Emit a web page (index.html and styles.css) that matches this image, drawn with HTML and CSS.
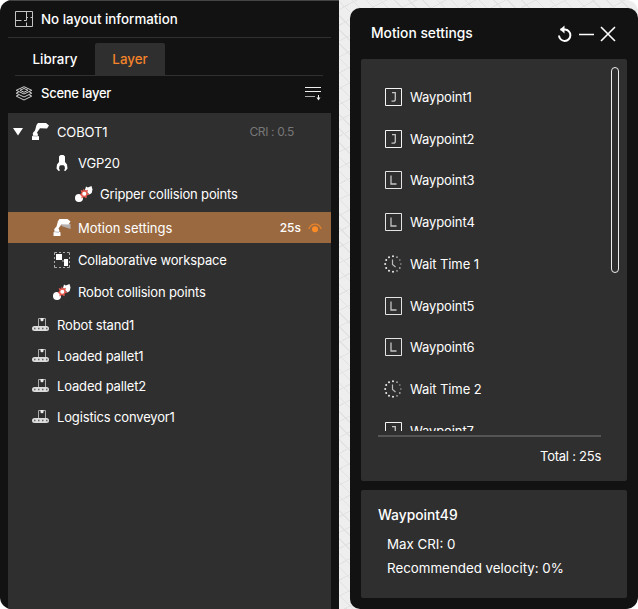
FILE: index.html
```html
<!DOCTYPE html>
<html lang="en">
<head>
<meta charset="utf-8">
<title>Layer panel</title>
<link rel="stylesheet" href="styles.css">
</head>
<body>
<svg class="defs" width="0" height="0">
  <defs>
    <symbol id="layout" viewBox="0 0 18 16"><path d="M.5.5h17v15H.5zM11.500 .5v9h-2.500M.5 9.500h6M11.500 6.500h1.500M15.500 6.500h2M11.500 11.500v4" fill="none" stroke="#c4c4c4"/></symbol>
    <symbol id="layers" viewBox="0 0 18 15"><path d="M9 .7l7.800 3.600L9 8 1.200 4.300zM4 5.700L1.200 7.200 9 11l7.800-3.800L14 5.700M4 8.700l-2.800 1.400L9 14l7.800-3.900L14 8.700M5 4.300l4-1.800 4 1.800-4 1.900z" fill="none" stroke="#d0d0d0" stroke-width="1"/></symbol>
    <symbol id="sort" viewBox="0 0 17 15"><path d="M0 1.500h16M0 5.500h16" stroke="#eee" stroke-width="1.100"/><path d="M0 10.500h10" stroke="#aaa"/><path d="M13.500 9v4" stroke="#eee"/><path d="M11.500 11.500h4l-2 3z" fill="#eee"/></symbol>
    <symbol id="robot" viewBox="0 0 17 17"><path d="M6 0h8l3 2.500L15 5.500 8 5.200 5 9.500l1 2-.5 1 1.500 1V17H0v-3.500l1-1L.8 10 3 7.500 4.500 2z" fill="#fff"/><path d="M1 12.800l4.500.5" stroke="#aaa" stroke-width=".8"/></symbol>
    <symbol id="motion" viewBox="0 0 17 17"><path d="M8 5h9v5l-9-3z" fill="#b7b1ad"/><path d="M6 0h8l3 2.500L15 5.500 8 5.200 5 9.500l1 2-.5 1 1.500 1V17H0v-3.500l1-1L.8 10 3 7.500 4.500 2z" fill="#fff"/><path d="M1 12.800l4.500.5" stroke="#aaa" stroke-width=".8"/></symbol>
    <symbol id="gripper" viewBox="0 0 12 16"><path d="M4.500 0h3L9 1.500V7l2 2.500.5 4L9.500 16 8 15.500l1-2L8.500 11l-1-.8h-3l-1 .8-.5 2.500 1 2-1.500.5L.5 13.500l.5-4L3 7V1.500z" fill="#fff"/></symbol>
    <symbol id="collision" viewBox="0 0 18 16"><circle cx="4" cy="12" r="4" fill="#fff"/><path d="M10 4l1-3.500 1.800 1L16.500 0l1 3.500-.8 3.500-2.200 1.500z" fill="#fff"/><path d="M8.500 2.500l1.500 2 3-.8-.7 3 2 2-2.500.8-.3 2.800-2.500-1.200-2.500 1.400V10L4.500 8.500l2-1.600L5.700 4l2.500.8z" fill="#e6594f"/><circle cx="9.300" cy="7.800" r="2" fill="#fff"/></symbol>
    <symbol id="workspace" viewBox="0 0 16 16"><path d="M.5 3V.5H3M5 .5h2M9 .5h2M13 .5h2.500V3M15.500 5v2M15.500 9v2M15.500 13v2.500H13M11 15.500H9M7 15.500H5M3 15.500H.5V13M.5 11V9M.5 7V5" fill="none" stroke="#aaa"/><path d="M2 2h6v6H2zM10 7h4v7h-4z" fill="#fff"/><path d="M8 8h2v2H8z" fill="#777"/></symbol>
    <symbol id="stand" viewBox="0 0 17 13"><path d="M6.500 8V.5h7V8" fill="none" stroke="#aaa"/><path d="M8.500 0h3v2.500L10 3.500 8.500 2.500z" fill="#eee"/><rect y="8" width="17" height="5" rx="2.500" fill="#ddd"/><path d="M2 10.500h1.500M6 10.500h1.500M10 10.500h1.500M14 10.500h1.500" stroke="#666" stroke-width="1.300"/></symbol>
    <symbol id="eye" viewBox="0 0 14 10"><path d="M.7 6C3.500-.5 10.500-.5 13.300 6" fill="none" stroke="#e98327" stroke-width="1.200"/><circle cx="7" cy="6.300" r="3" fill="#ff8b25"/></symbol>
    <symbol id="joint" viewBox="0 0 17 18"><path d="M.5.500h16v17H.5z" fill="none" stroke="#f4f4f4"/><path d="M7 4.700h3.300v6.800q0 1.700-2 1.700H6.500" fill="none" stroke="#c4c4c4" stroke-width="1.300"/></symbol>
    <symbol id="linear" viewBox="0 0 17 18"><path d="M.5.500h16v17H.5z" fill="none" stroke="#e4e4e4"/><path d="M6 4.500v8.500h5.500" fill="none" stroke="#c4c4c4" stroke-width="1.300"/></symbol>
    <symbol id="wait" viewBox="0 0 18 18"><g fill="#eee"><circle cx="9" cy="1.200" r="1"/><circle cx="5" cy="2.200" r="1"/><circle cx="2.200" cy="5" r="1"/><circle cx="1.200" cy="9" r="1"/><circle cx="2.200" cy="13" r="1"/><circle cx="5" cy="15.800" r="1"/><circle cx="9" cy="16.800" r="1"/></g><g fill="#aaa"><circle cx="13" cy="2.200" r=".9"/><circle cx="13" cy="15.800" r=".9"/><circle cx="15.800" cy="13" r=".9"/></g><g fill="#777"><circle cx="15.800" cy="5" r=".9"/><circle cx="16.800" cy="9" r=".9"/></g><path d="M8.500 4.500v5l3 2.500" fill="none" stroke="#bbb" stroke-width="1.200"/></symbol>
  </defs>
</svg>
<main class="app">
  <section class="side">
    <header class="info"><svg width="18" height="16"><use href="#layout"/></svg><span>No layout information</span></header>
    <nav class="tabs"><span class="tab">Library</span><span class="tab active">Layer</span></nav>
    <div class="scene"><svg width="18" height="15"><use href="#layers"/></svg><span>Scene layer</span><svg class="push" width="17" height="15"><use href="#sort"/></svg></div>
    <div class="tree">
      <div class="row root"><svg class="caret" width="10" height="8"><path d="M0 0h10L5 7.500z" fill="#fff"/></svg><svg width="17" height="17"><use href="#robot"/></svg><span>COBOT1</span><span class="cri">CRI : 0.5</span></div>
      <div class="row vgp"><svg width="12" height="16"><use href="#gripper"/></svg><span>VGP20</span></div>
      <div class="row leaf"><svg width="18" height="16"><use href="#collision"/></svg><span>Gripper collision points</span></div>
      <div class="row child selected"><svg width="18" height="17"><use href="#motion"/></svg><span>Motion settings</span><span class="time">25s</span><svg class="eye" width="14" height="10"><use href="#eye"/></svg></div>
      <div class="row child gap1"><svg width="18" height="16"><use href="#workspace"/></svg><span>Collaborative workspace</span></div>
      <div class="row child gap1"><svg width="18" height="16"><use href="#collision"/></svg><span>Robot collision points</span></div>
      <div class="row item gap2"><svg width="17" height="13"><use href="#stand"/></svg><span>Robot stand1</span></div>
      <div class="row item"><svg width="17" height="13"><use href="#stand"/></svg><span>Loaded pallet1</span></div>
      <div class="row item tight"><svg width="17" height="13"><use href="#stand"/></svg><span>Loaded pallet2</span></div>
      <div class="row item"><svg width="17" height="13"><use href="#stand"/></svg><span>Logistics conveyor1</span></div>
    </div>
  </section>
  <section class="dialog">
    <header class="bar"><h1>Motion settings</h1>
      <svg width="50" height="18" fill="none" stroke="#fff"><path d="M3.500 4.500H8a5.700 5.700 0 1 1-6 6" stroke-width="2"/><path d="M3 4.500L7.500.5v8z" fill="#fff" stroke="none"/><path d="M22 9.500h15" stroke-width="1.500"/></svg>
      <svg class="close" width="16" height="16"><path d="M1 1l14 14M15 1L1 15" stroke="#fff" stroke-width="1.600"/></svg>
    </header>
    <div class="card steps">
      <div class="list">
        <div class="step"><svg width="17" height="18"><use href="#joint"/></svg><span>Waypoint1</span></div>
        <div class="step"><svg width="17" height="18"><use href="#joint"/></svg><span>Waypoint2</span></div>
        <div class="step"><svg width="17" height="18"><use href="#linear"/></svg><span>Waypoint3</span></div>
        <div class="step"><svg width="17" height="18"><use href="#linear"/></svg><span>Waypoint4</span></div>
        <div class="step"><svg class="clock" width="18" height="18"><use href="#wait"/></svg><span>Wait Time 1</span></div>
        <div class="step"><svg width="17" height="18"><use href="#linear"/></svg><span>Waypoint5</span></div>
        <div class="step"><svg width="17" height="18"><use href="#linear"/></svg><span>Waypoint6</span></div>
        <div class="step"><svg class="clock" width="18" height="18"><use href="#wait"/></svg><span>Wait Time 2</span></div>
        <div class="step"><svg width="17" height="18"><use href="#joint"/></svg><span>Waypoint7</span></div>
      </div>
      <div class="total">Total : 25s</div>
      <div class="thumb"></div>
    </div>
    <div class="card detail"><h2>Waypoint49</h2><p>Max CRI: 0</p><p>Recommended velocity: 0%</p></div>
  </section>
</main>
</body>
</html>
```

FILE: styles.css
```css
* { box-sizing: border-box; }
body { margin: 0; background: #fff; color: #fff; font: 400 13px/20px Inter, sans-serif; white-space: nowrap; }
.defs { position: absolute; }
svg { display: block; flex: none; }
.app {
  display: flex; justify-content: space-between; width: 638px; height: 609px; border-radius: 12px; overflow: hidden;
  background:
    repeating-linear-gradient(45deg, transparent 0 9px, #e2e2e2 9px 10px),
    repeating-linear-gradient(152deg, transparent 0 13px, #e2e2e2 13px 14px), #eee;
}
.side { width: 339px; padding: 0 8px; background: #121212; border-top: 1px solid #454545; display: flex; flex-direction: column; }
.info { height: 37px; flex: none; display: flex; align-items: center; gap: 8px; padding-left: 7px; border-bottom: 1px solid #303030; font-size: 13.33px; }
.tabs { height: 38px; flex: none; margin: 0 8px 0 7px; display: flex; align-items: flex-end; border-bottom: 1px solid #303030; font-size: 13.33px; font-weight: 500; }
.tab { width: 80px; height: 32px; display: flex; align-items: center; justify-content: center; }
.tab.active { width: 70px; background: #2f2f2f; color: #f5842a; border-radius: 2px 2px 0 0; }
.scene { height: 37px; flex: none; display: flex; align-items: center; gap: 8px; padding: 0 9px 2px 7px; letter-spacing: -.25px; }
.scene span { margin-top: -1px; }
.push { margin-left: auto; }
.info, .scene { font-weight: 500; }
.tree { flex: 1; background: #2f2f2f; padding-top: 3px; letter-spacing: -.15px; }
.row { height: 31px; display: flex; align-items: center; }
.root { padding-left: 5px; }
.caret { margin-right: 9px; }
.root span { margin-left: 8px; }
.root .cri { margin-left: auto; margin-right: 37px; color: #777; font-size: 12px; letter-spacing: -.35px; }
.vgp { padding-left: 48px; gap: 10px; }
.leaf { padding-left: 67px; gap: 7px; }
.child { padding-left: 45px; gap: 7px; }
.item { padding-left: 24px; gap: 8px; }
.gap1 { margin-top: 1px; }
.gap2 { margin-top: 2px; }
.tight { margin-top: -1px; }
.selected { margin-top: 3px; background: #9a6940; letter-spacing: 0; }
.time { margin-left: auto; font-size: 12px; font-weight: 500; }
.eye { margin-right: 9px; }
.dialog { width: 288px; margin-top: 8px; padding: 0 11px; background: #121212; border-radius: 10px; }
.bar { height: 51px; display: flex; align-items: center; padding: 0 11px 0 10px; }
h1 { margin: -2px auto 0 0; font-size: 13.8px; font-weight: 500; }
.close { margin-left: -7px; }
.card { background: #2f2f2f; border-radius: 2px; }
.steps { position: relative; height: 422px; padding: 17px 26px 0 17px; }
.list { height: 355px; padding-left: 7px; overflow: hidden; letter-spacing: -.1px; }
.step { height: 41.75px; display: flex; align-items: center; }
.step span { margin-left: auto; width: 191px; }
.clock { margin-left: -1px; }
.total { margin-top: 4px; padding-top: 9px; border-top: 2px solid #555; text-align: right; letter-spacing: -.25px; }
.thumb { position: absolute; left: 250px; top: 8px; width: 8px; height: 206px; border: 1px solid #eee; border-radius: 4px; }
.detail { height: 108px; margin-top: 9px; padding: 15px 17px; }
h2 { margin: 0 0 9px; font-size: 13.8px; line-height: 20px; font-weight: 500; }
p { margin: 0 0 4px 9px; font-size: 13.33px; }
```
